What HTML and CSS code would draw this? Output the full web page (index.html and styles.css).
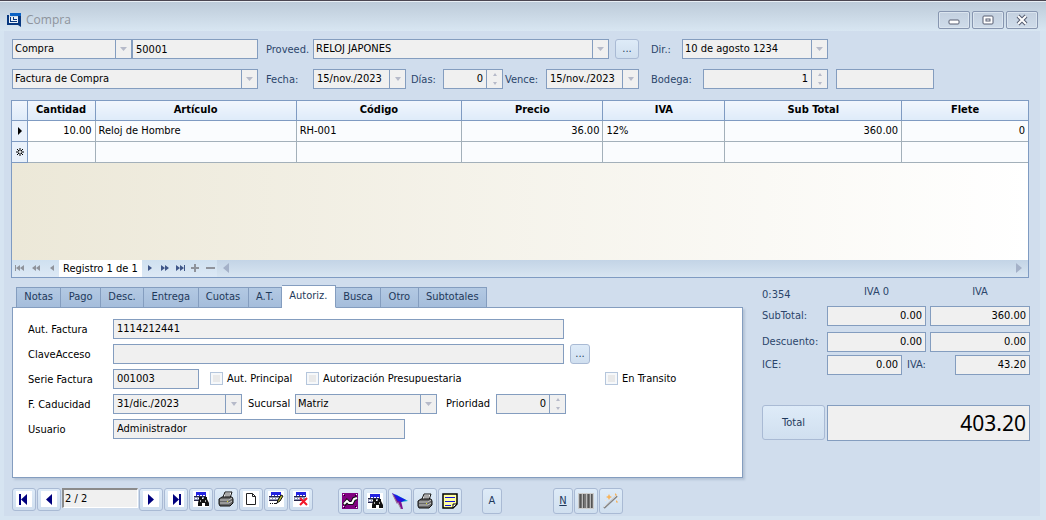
FILE: index.html
```html
<!DOCTYPE html>
<html lang="es">
<head>
<meta charset="utf-8">
<title>Compra</title>
<link rel="stylesheet" href="styles.css">
</head>
<body>
<svg class="defs" aria-hidden="true">
  <symbol id="i-sheet" viewBox="0 0 16 16"><path fill="#2323e0" d="M3 1h10v4H3z"/><path fill="#8f95b5" d="M1 6h11v4H1z"/><path fill="#fff" d="M4 4h2v1H4zM7 4h2v1H7zM10 4h2v1h-2zM2 7h2v1H2zM5 7h2v1H5zM8 7h2v1H8z"/><path fill="#26264a" d="M1 5h12v1H1zM1 9h11v1H1z"/></symbol>
  <symbol id="i-find" viewBox="0 0 16 16"><use href="#i-sheet"/><path fill="#111" d="M6 6h3v2h2V6h3v2l2 4v3h-4v-3h-3v3H5v-3l1-4z"/><path fill="#aaa" d="M7 9h1v2H7zM12 9h1v2h-1z"/></symbol>
  <symbol id="i-edit" viewBox="0 0 16 16"><use href="#i-sheet"/><path d="M9 12l1-3 3-5 2 1-3 5z" fill="#b9b93a" stroke="#111"/><path fill="#111" d="M2 12h1v1H2zM4 12h1v1H4zM6 12h3v1H6z"/></symbol>
  <symbol id="i-delete" viewBox="0 0 16 16"><use href="#i-sheet"/><path d="M7 7l7 7M14 7l-7 7" stroke="#f3182a" stroke-width="2"/></symbol>
  <symbol id="i-print" viewBox="0 0 16 16"><path d="M5 6l2-5h7l-2 6" fill="#fff" stroke="#111"/><path d="M7 3h5M7 5h5" stroke="#555"/><path d="M1 8l3-2h10l1 2v4l-3 3H2l-1-2z" fill="#666" stroke="#111"/><path d="M2 9h9l3-2M2 12h9l3-2" stroke="#ccc" fill="none"/><path fill="#dede30" d="M9 10h1v1H9z"/></symbol>
  <symbol id="i-page" viewBox="0 0 16 16"><path d="M3.500 2.500h6l3 3v8h-9zM9.500 2.500v3h3" fill="#fff" stroke="#222"/></symbol>
  <symbol id="i-first" viewBox="0 0 16 16"><path fill="#00007e" d="M3 3h2v11H3zM11 3v11L5 8.500z"/></symbol>
  <symbol id="i-prev" viewBox="0 0 16 16"><path fill="#00007e" d="M11 3v11L5 8.500z"/></symbol>
  <symbol id="i-next" viewBox="0 0 16 16"><path fill="#00007e" d="M5 3v11l6-5.500z"/></symbol>
  <symbol id="i-last" viewBox="0 0 16 16"><path fill="#00007e" d="M11 3h2v11h-2zM5 3v11l6-5.500z"/></symbol>
  <symbol id="i-chart" viewBox="0 0 16 16"><path fill="#800080" d="M0 0h16v16H0z"/><path d="M2 12l3-4 2 2 3 0 2-4 3-1" fill="none" stroke="#111" stroke-width="4"/><path d="M2 11l3-3 2 2 3 0 2-4 3-1" fill="none" stroke="#fff" stroke-width="2"/><path fill="#111" d="M2 2h1v1H2zM13 2h1v1h-1zM2 14h1v1H2zM13 13h1v1h-1z"/><path fill="#fff" d="M1 1h1v1H1zM14 1h1v1h-1zM1 13h1v1H1zM14 14h1v1h-1z"/></symbol>
  <symbol id="i-arrow" viewBox="0 0 16 16"><path fill="#00a0c8" d="M3 1l13 7-7 1z"/><path fill="#1818e8" d="M0 0l14 7-5 2z"/><path fill="#7a1090" d="M0 0l5 11 1-2 3 7h2l-2-8z"/><path fill="#1818e8" d="M0 0l6 8 4 1z"/><path d="M1 2l4 8M6 10l3 6" stroke="#a08a9a"/></symbol>
  <symbol id="i-note" viewBox="0 0 16 16"><path d="M1 1h14v10l-4 4H1z" fill="#ffffa0" stroke="#000" stroke-width="1.500"/><path d="M15 11h-4v4z" fill="#fff" stroke="#000"/><path d="M3 4.500h10M3 8.500h10M3 12.500h6" stroke="#1010e0"/></symbol>
  <symbol id="i-barcode" viewBox="0 0 16 16"><path fill="#ccc" d="M0 0h16v16H0z"/><path fill="#777" d="M1 1h14v14H1z"/><path d="M2.500 1v14M5.500 1v14M10.500 1v14M13.500 1v14" stroke="#555"/><path d="M4.500 1v14M8.500 1v14M12.500 1v14" stroke="#bbb"/></symbol>
  <symbol id="i-wand" viewBox="0 0 16 16"><path d="M1 15L14 3" stroke="#858585" stroke-width="2"/><path d="M1 14L14 2" stroke="#e2e2e2"/><path fill="#f7b45c" d="M6 1l1 2 2 1-2 1-1 2-1-2-2-1 2-1zM12 0l1 1 1 1-1 1-1-1zM13 7l1 1 1 1-1 1-1-1z"/><path fill="#fbe6cc" d="M2 7h1v1H2zM9 2h1v1H9zM15 5h1v1h-1z"/></symbol>
</svg>
<main class="window">
  <header class="titlebar">
    <svg class="logo" viewBox="0 0 14 14"><path fill="#fff" fill-opacity=".6" d="M2 4h9v8H2z"/><path fill="#07377f" d="M0 2h2v8h9v2H0z"/><path fill="#0b62c4" d="M3 0h11v3H3z"/><path fill="#07377f" d="M11 3h3v11l-3-2z"/><path fill="#07377f" d="M3 4h1v4h6v1H3zM6 4h1v2h3v1H6z"/></svg>
    <h1>Compra</h1>
    <div class="winbtns">
      <button class="winbtn" aria-label="Minimizar"><svg viewBox="0 0 14 12"><rect x="2" y="6" width="10" height="4" rx="1" fill="#fff" stroke="#565d70"/></svg></button>
      <button class="winbtn" aria-label="Restaurar"><svg viewBox="0 0 14 12"><rect x="2" y="2" width="10" height="8" rx="1" fill="#fff" stroke="#565d70"/><rect x="5" y="5" width="4" height="2" fill="#fff" stroke="#565d70"/></svg></button>
      <button class="winbtn" aria-label="Cerrar"><svg viewBox="0 0 14 12"><path d="M3 2l8 8M11 2l-8 8" stroke="#565d70" stroke-width="4"/><path d="M3 2l8 8M11 2l-8 8" stroke="#fff" stroke-width="2"/></svg></button>
    </div>
  </header>
  <div class="client">
    <section class="head">
      <div class="line">
        <select class="box w120" aria-label="Tipo"><option>Compra</option></select><input class="box grow" value="50001" aria-label="Número">
      </div>
      <label for="prov">Proveed.</label>
      <div class="line">
        <select class="box grow" id="prov"><option>RELOJ JAPONES</option></select>
        <button class="btn more side">...</button>
      </div>
      <div class="line third">
        <label class="l31" for="dir">Dir.:</label>
        <select class="box address" id="dir"><option>10 de agosto 1234</option></select>
      </div>
      <select class="box" aria-label="Documento"><option>Factura de Compra</option></select>
      <label for="fecha">Fecha:</label>
      <div class="line">
        <div class="box combo grow"><input id="fecha" value="15/nov./2023"><button class="drop" aria-label="Abrir"></button></div>
        <label class="pad" for="dias">Días:</label>
        <div class="box combo w60"><input class="num" id="dias" value="0"><span class="spin"><button aria-label="Más"></button><button aria-label="Menos"></button></span></div>
        <label class="pad2" for="vence">Vence:</label>
        <div class="box combo grow"><input id="vence" value="15/nov./2023"><button class="drop" aria-label="Abrir"></button></div>
      </div>
      <div class="line third">
        <label class="l52" for="bodega">Bodega:</label>
        <div class="box combo w125"><input class="num" id="bodega" value="1"><span class="spin"><button aria-label="Más"></button><button aria-label="Menos"></button></span></div>
        <input class="box store" aria-label="Nombre de bodega">
      </div>
    </section>

    <section class="gridbox">
      <table>
        <colgroup><col class="c0"><col class="c1"><col class="c2"><col class="c3"><col class="c4"><col class="c5"><col class="c6"><col class="c7"></colgroup>
        <thead><tr><th></th><th>Cantidad</th><th>Artículo</th><th>Código</th><th>Precio</th><th>IVA</th><th>Sub Total</th><th>Flete</th></tr></thead>
        <tbody>
          <tr><td class="mark"><svg viewBox="0 0 8 8"><path d="M2 0v8l4-4z"/></svg></td><td class="num focus">10.00</td><td>Reloj de Hombre</td><td>RH-001</td><td class="num">36.00</td><td>12%</td><td class="num">360.00</td><td class="num">0</td></tr>
          <tr><td class="mark"><svg viewBox="0 0 8 8"><path d="M4 0v8M0 4h8M1 1l6 6M7 1l-6 6" stroke="#000"/><path d="M3 3h2v2H3z" fill="#ddd"/></svg></td><td></td><td></td><td></td><td></td><td></td><td></td><td></td></tr>
        </tbody>
      </table>
      <div class="void"></div>
      <div class="nav">
        <button class="off" aria-label="Primero"><svg viewBox="0 0 12 8"><path d="M1 1h1v6H1zM6 1v6L2 4zM10 1v6L6 4z"/></svg></button>
        <button class="off" aria-label="Página anterior"><svg viewBox="0 0 12 8"><path d="M6 1v6L2 4zM10 1v6L6 4z"/></svg></button>
        <button class="off narrow" aria-label="Anterior"><svg viewBox="0 0 12 8"><path d="M8 1v6L4 4z"/></svg></button>
        <span class="rec">Registro 1 de 1</span>
        <button aria-label="Siguiente"><svg viewBox="0 0 12 8"><path d="M4 1v6l4-3z"/></svg></button>
        <button aria-label="Página siguiente"><svg viewBox="0 0 12 8"><path d="M2 1v6l4-3zM6 1v6l4-3z"/></svg></button>
        <button aria-label="Último"><svg viewBox="0 0 12 8"><path d="M10 1h1v6h-1zM2 1v6l4-3zM6 1v6l4-3z"/></svg></button>
        <button class="off narrow" aria-label="Agregar"><svg viewBox="0 0 12 8"><path d="M5 0h2v3h3v2H7v3H5V5H2V3h3z"/></svg></button>
        <button class="off narrow" aria-label="Quitar"><svg viewBox="0 0 12 8"><path d="M2 3h9v2H2z"/></svg></button>
        <div class="scroll"><svg viewBox="0 0 6 10"><path d="M6 0v10L0 5z"/></svg><svg viewBox="0 0 6 10"><path d="M0 0v10l6-5z"/></svg></div>
      </div>
    </section>

    <div class="lower">
      <section class="tabs">
        <div class="tablist" role="tablist">
          <button role="tab">Notas</button><button role="tab">Pago</button><button role="tab">Desc.</button><button role="tab">Entrega</button><button role="tab">Cuotas</button><button role="tab">A.T.</button><button role="tab" class="active" aria-selected="true">Autoriz.</button><button role="tab">Busca</button><button role="tab">Otro</button><button role="tab">Subtotales</button>
        </div>
        <div class="panel">
          <label for="aut">Aut. Factura</label>
          <div class="line"><input class="box w451" id="aut" value="1114212441"></div>
          <label for="clave">ClaveAcceso</label>
          <div class="line"><input class="box w451" id="clave"><button class="btn more small">...</button></div>
          <label for="serie">Serie Factura</label>
          <div class="line"><input class="box w86" id="serie" value="001003">
            <label class="check k1"><input type="checkbox">Aut. Principal</label>
            <label class="check k2"><input type="checkbox">Autorización Presupuestaria</label>
            <label class="check k3"><input type="checkbox">En Transito</label></div>
          <label for="cad">F. Caducidad</label>
          <div class="line"><div class="box combo w129"><input id="cad" value="31/dic./2023"><button class="drop" aria-label="Abrir"></button></div>
            <label class="suc" for="suc">Sucursal</label><select class="box w142" id="suc"><option>Matriz</option></select>
            <label class="pri" for="pri">Prioridad</label><div class="box combo w70"><input class="num" id="pri" value="0"><span class="spin"><button aria-label="Más"></button><button aria-label="Menos"></button></span></div></div>
          <label for="usr">Usuario</label>
          <div class="line"><input class="box w292" id="usr" value="Administrador"></div>
        </div>
      </section>
      <section class="totals">
        <span class="ratio">0:354</span><span class="cap">IVA 0</span><span class="cap">IVA</span>
        <label for="s0">SubTotal:</label><input class="box num" id="s0" value="0.00"><input class="box num" value="360.00" aria-label="SubTotal IVA">
        <label for="d0">Descuento:</label><input class="box num" id="d0" value="0.00"><input class="box num" value="0.00" aria-label="Descuento IVA">
        <label for="ice">ICE:</label>
        <div class="taxes"><input class="box num" id="ice" value="0.00"><label for="iva">IVA:</label><input class="box num" id="iva" value="43.20"></div>
        <button class="btn total">Total</button><input class="box num grand" value="403.20" aria-label="Total">
      </section>
    </div>

    <footer class="tools">
      <div class="group">
        <button class="btn" aria-label="Primero"><svg class="white"><use href="#i-first"/></svg></button>
        <button class="btn" aria-label="Anterior"><svg class="white"><use href="#i-prev"/></svg></button>
        <input class="pos" value="2 / 2" aria-label="Posición">
        <button class="btn" aria-label="Siguiente"><svg class="white"><use href="#i-next"/></svg></button>
        <button class="btn" aria-label="Último"><svg class="white"><use href="#i-last"/></svg></button>
        <button class="btn" aria-label="Buscar"><svg class="white"><use href="#i-find"/></svg></button>
        <button class="btn" aria-label="Imprimir"><svg><use href="#i-print"/></svg></button>
        <button class="btn" aria-label="Nuevo"><svg class="white"><use href="#i-page"/></svg></button>
        <button class="btn" aria-label="Editar"><svg class="white"><use href="#i-edit"/></svg></button>
        <button class="btn" aria-label="Eliminar"><svg class="white"><use href="#i-delete"/></svg></button>
      </div>
      <div class="group tall g2">
        <button class="btn" aria-label="Gráfico"><svg><use href="#i-chart"/></svg></button>
        <button class="btn" aria-label="Consultar"><svg class="white"><use href="#i-find"/></svg></button>
        <button class="btn" aria-label="Enviar"><svg><use href="#i-arrow"/></svg></button>
        <button class="btn" aria-label="Imprimir documento"><svg><use href="#i-print"/></svg></button>
        <button class="btn" aria-label="Notas"><svg><use href="#i-note"/></svg></button>
      </div>
      <div class="group tall g3"><button class="btn letter">A</button></div>
      <div class="group tall g4">
        <button class="btn letter"><u>N</u></button>
        <button class="btn" aria-label="Código de barras"><svg><use href="#i-barcode"/></svg></button>
        <button class="btn" aria-label="Asistente"><svg><use href="#i-wand"/></svg></button>
      </div>
    </footer>
  </div>
</main>
</body>
</html>
```
FILE: styles.css
```css
* { box-sizing: border-box; }
body { margin: 0; background: #d6e4f1; font: 11px/14px "DejaVu Sans Condensed", "Noto Sans", sans-serif; color: #000; }
button, input, select { font: inherit; color: inherit; margin: 0; padding: 0; border: 0; background: none; border-radius: 0; min-width: 0; }
button { display: flex; align-items: center; justify-content: center; }
svg { display: block; }
.defs { position: absolute; width: 0; height: 0; }
.window { min-height: 100vh; border-top: 1px solid #4b4651; display: flex; flex-direction: column; padding: 0 6px 4px 4px; background: #d6e4f1; }

.titlebar { display: flex; align-items: center; height: 30px; margin: 0 -6px 0 -4px; padding: 6px 8px 0 7px; border-top: 1px solid #e9eff5; background: linear-gradient(#bdcbd9, #d8e6f2); }
.logo { width: 14px; height: 14px; }
.titlebar h1 { margin: 0 auto 0 5px; font: 12px/16px "Open Sans", sans-serif; color: #8e949c; }
.winbtns { display: flex; gap: 2px; }
.winbtn { width: 32px; height: 18px; border: 1px solid #8796b0; border-radius: 2px; box-shadow: inset 0 0 0 1px #dbe5ef; background: linear-gradient(#c3d0df, #cfdcea); }
.winbtn svg { width: 14px; height: 12px; }

.client { flex: 1; background: #d0dded; padding: 8px 10px 2px 8px; }
.box { height: 20px; border: 1px solid #849dbf; background-color: #f0f0f0; padding: 0 3px; }
select.box { appearance: none; padding: 0 18px 0 2px; background-image: url("data:image/svg+xml,%3Csvg xmlns='http://www.w3.org/2000/svg' width='16' height='18'%3E%3Cpath fill='%23849dbf' d='M0 0h1v18H0z'/%3E%3Cpath fill='%23b6bac9' d='M5 7h7l-3.500 4z'/%3E%3C/svg%3E"); background-repeat: no-repeat; background-position: right center; }
.line { display: flex; align-items: center; min-width: 0; }
.grow { flex: 1 1 0; }
.num { text-align: right; }
.combo { display: flex; padding: 0; }
.combo input { flex: 1; width: 0; padding: 0 3px; }
.drop { width: 16px; border-left: 1px solid #849dbf; }
.drop::before { content: ""; border: 3px solid transparent; border-top: 4px solid #b6bac9; border-bottom: 0; }
.spin { display: flex; flex-direction: column; width: 16px; border-left: 1px solid #849dbf; }
.spin button { flex: 1; }
.spin button::before { content: ""; border: 2px solid transparent; border-bottom: 3px solid #b6bac9; border-top: 0; }
.spin button + button::before { border-top: 3px solid #b6bac9; border-bottom: 0; }
.btn { border: 1px solid #a9bad4; border-radius: 3px; background: linear-gradient(#deebf8, #d0dfef); color: #1e395b; }
.w60 { width: 60px; }
.w70 { width: 70px; }
.w86 { width: 86px; }
.w120 { width: 120px; }
.w125 { width: 125px; }
.w129 { width: 129px; }
.w142 { width: 142px; }
.w292 { width: 292px; }
.w451 { width: 451px; }

.head { display: grid; grid-template-columns: 246fr 55px 326fr 391px; row-gap: 10px; align-items: center; padding-bottom: 11px; color: #2b456b; }
.head label { padding-top: 2px; }
.head > label { padding-left: 8px; }
.head .box { color: #000; }
.third { padding-left: 12px; }
.l31 { width: 31px; }
.l52 { width: 52px; }
.address { width: 146px; }
.store { width: 98px; margin-left: 8px; }
.head .pad { width: 37px; padding-left: 5px; }
.head .pad2 { width: 43px; padding-left: 2px; }
.more { height: 20px; }
.side { width: 24px; margin-left: 6px; }

.gridbox { border: 1px solid #7f9bc2; margin: 0 1px 0 -1px; }
table { width: 100%; table-layout: fixed; border-collapse: collapse; background: #fafcfe; }
.c0 { width: 15px; }
.c1 { width: 68px; }
.c2 { width: 19.8%; }
.c3 { width: 16.3%; }
.c4 { width: 13.9%; }
.c5 { width: 12%; }
.c6 { width: 17.4%; }
th { height: 19px; padding: 0; background: linear-gradient(#f1f6fd, #deebf9); border-right: 1px solid #7f9bc2; border-bottom: 1px solid #7f9bc2; font-weight: bold; }
td { height: 21px; padding: 0 3px; border-right: 1px solid #a3b0ba; border-bottom: 1px solid #a3b0ba; }
th:last-child, td:last-child { border-right: 0; }
td.mark { padding: 0 4px; background: #e9f1fb; border-color: #7f9bc2; }
.mark svg { width: 8px; height: 8px; }
.focus { background: #fff; }
.void { height: 97px; background: linear-gradient(to right, #ece8d8, #fff); }
.nav { display: flex; height: 17px; background: linear-gradient(#cfe0f0, #dde9f5); }
.nav button { width: 15px; color: #3f5688; }
.nav button.off { color: #8f939b; width: 16px; }
.nav button.narrow { width: 15px; }
.nav button svg { width: 12px; height: 8px; fill: currentColor; }
.rec { background: #fff; padding: 2px 4px 1px; white-space: nowrap; width: 83px; }
.scroll { flex: 1; display: flex; justify-content: space-between; align-items: center; padding: 0 6px; background: linear-gradient(#c3d4e6, #d8e5f1); }
.scroll svg { width: 6px; height: 10px; fill: #a4b1c8; }

.lower { display: grid; grid-template-columns: 1fr 268px; gap: 19px; padding-top: 7px; }
.tablist { display: flex; align-items: flex-end; width: 475px; padding-left: 4px; height: 23px; margin-bottom: -1px; position: relative; }
.tablist button { flex: 1 0 auto; height: 21px; padding: 0 6px; border: 1px solid #849dbf; border-left-width: 0; background: linear-gradient(#b3c9e3, #a5bddb); color: #1e395b; }
.tablist button:first-child { border-left-width: 1px; }
.tablist .active { height: 23px; background: #fff; border-bottom-color: #fff; }
.panel { border: 1px solid #849dbf; background: #fff; min-height: 171px; padding: 11px 15px; display: grid; grid-template-columns: 85px 1fr; row-gap: 5px; align-content: start; align-items: center; box-shadow: 2px 2px 2px #b4c3d6; }
.panel > label { padding-top: 2px; }
.panel .line { height: 20px; }
.small { width: 20px; margin-left: 6px; }
.check { display: flex; align-items: center; gap: 4px; white-space: nowrap; }
.check input { appearance: none; width: 13px; height: 13px; border: 1px solid #b5c6dc; background: #e9e9e9; box-shadow: inset 0 0 0 2px #f6f8fa; }
.k1 { margin-left: 11px; width: 96px; }
.k2 { width: 299px; }
.suc { width: 53px; padding-left: 6px; }
.pri { width: 59px; padding-left: 9px; }

.totals { display: grid; column-gap: 4px; align-content: start; align-items: center; grid-template-rows: 21px 20px 6px 20px 3px 20px 30px 36px; grid-template-columns: 61px 99px 100px; color: #2b456b; }
.totals .box { color: #000; width: 100%; }
.cap { text-align: center; align-self: start; }
.totals > :nth-child(n+7):nth-child(-n+9) { grid-row: 4; }
.totals > :nth-child(n+10):nth-child(-n+11) { grid-row: 6; }
.totals > :nth-child(n+12) { grid-row: 8; }
.taxes { grid-column: 2 / 4; display: flex; justify-content: space-between; align-items: center; }
.totals .taxes .box { width: 75px; }
.taxes label { margin-right: auto; padding-left: 5px; }
.total { height: 35px; width: 63px; }
.totals .grand { grid-column: 2 / 4; height: 36px; font: 21px/30px "Noto Sans", sans-serif; }

.tools { display: flex; align-items: flex-start; padding-top: 10px; }
.group { display: flex; gap: 1px; }
.group .btn { width: 24px; height: 23px; }
.tall .btn { height: 26px; }
.group svg { width: 16px; height: 16px; }
.white { background: #fff; }
.pos { width: 76px; height: 20px; padding: 0 1px; background: #f0f0f0; border: 2px solid #fff; border-top-color: #8b8b8b; border-left-color: #8b8b8b; border-right-width: 1px; border-bottom-width: 1px; }
.g2 { margin-left: 25px; }
.g3 { margin-left: 20px; }
.g4 { margin-left: 51px; }
.group .btn.letter { width: 20px; }
```
